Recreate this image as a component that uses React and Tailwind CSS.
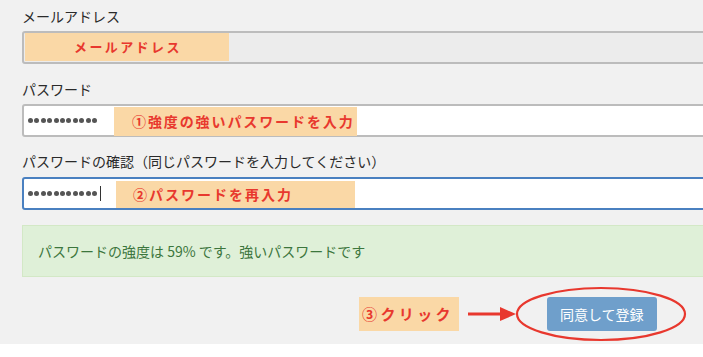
import React from "react";

const font = { fontFamily: '"Noto Sans CJK JP", "Noto Sans", sans-serif' };

const Dots = ({ cursor }) => (
  <div className="flex items-center gap-[1.4px]">
    {Array.from({ length: 11 }).map((_, i) => (
      <span key={i} className="block w-[5px] h-[5px] rounded-full bg-[#555]" />
    ))}
    {cursor && <span className="block ml-[2px] w-px h-[15px] bg-[#333]" />}
  </div>
);

const Note = ({ className, children }) => (
  <div
    className={`absolute flex items-center bg-[#fad8a6] text-[#e8382e] font-bold ${className}`}
  >
    {children}
  </div>
);

export default function App() {
  return (
    <div className="w-[703px] h-[357px] bg-white overflow-hidden" style={font}>
      <div className="relative h-[344px] bg-[#f1f1f1] pl-[22px] pt-[6px] overflow-hidden">
        {/* email */}
        <div className="h-[20px] leading-[20px] text-[14px] text-[#2a2a2a]">メールアドレス</div>
        <div className="mt-[5px] w-[720px] h-[33px] border-2 border-[#bcbcbc] rounded-[3px] bg-[#ececec]" />

        {/* password */}
        <div className="mt-[15px] h-[20px] leading-[20px] text-[14px] text-[#2a2a2a]">パスワード</div>
        <div className="mt-[5px] w-[720px] h-[33px] border-2 border-[#bcbcbc] rounded-[3px] bg-white flex items-center pl-[4px]">
          <Dots />
        </div>

        {/* confirm */}
        <div className="mt-[14px] h-[20px] leading-[20px] text-[14px] text-[#2a2a2a]">
          パスワードの確認（同じパスワードを入力してください）
        </div>
        <div className="mt-[6px] w-[720px] h-[33px] border-2 border-[#4a80c0] rounded-[3px] bg-white flex items-center pl-[4px]">
          <Dots cursor />
        </div>

        {/* strength */}
        <div className="mt-[15px] w-[720px] h-[52px] bg-[#dff0d8] border border-[#d3e8c6] flex items-center pl-[15px] text-[14px] text-[#3c763d]">
          パスワードの強度は 59% です。強いパスワードです
        </div>

        {/* submit */}
        <div className="mt-[20px] flex">
          <button className="ml-[525px] h-[34px] px-[13px] rounded-[3px] bg-[#6f9fcb] text-white text-[14px]">
            同意して登録
          </button>
        </div>

        {/* annotations */}
        <Note className="left-[25px] top-[33px] w-[204px] h-[28px] pl-[49px] text-[13px] tracking-[2.4px]">
          メールアドレス
        </Note>
        <Note className="left-[114px] top-[107px] w-[243px] h-[29px] pl-[18px] text-[14px] tracking-[1.9px]">
          ①強度の強いパスワードを入力
        </Note>
        <Note className="left-[116px] top-[181px] w-[239px] h-[27px] pl-[17px] text-[14px] tracking-[2px]">
          ②パスワードを再入力
        </Note>
        <Note className="left-[359px] top-[297px] w-[100px] h-[34px] pl-[3px] text-[15px] tracking-[3.4px]">
          ③クリック
        </Note>

        <svg className="absolute left-[466px] top-[306px]" width="52" height="16" viewBox="0 0 52 16">
          <line x1="2" y1="8" x2="36" y2="8" stroke="#e8382e" strokeWidth="3" />
          <polygon points="34,1 50,8 34,15" fill="#e8382e" />
        </svg>
        <svg className="absolute left-[514px] top-[285px]" width="174" height="58" viewBox="0 0 174 58">
          <ellipse cx="87" cy="29" rx="84" ry="26" fill="none" stroke="#e8382e" strokeWidth="2.2" />
        </svg>
      </div>
    </div>
  );
}
